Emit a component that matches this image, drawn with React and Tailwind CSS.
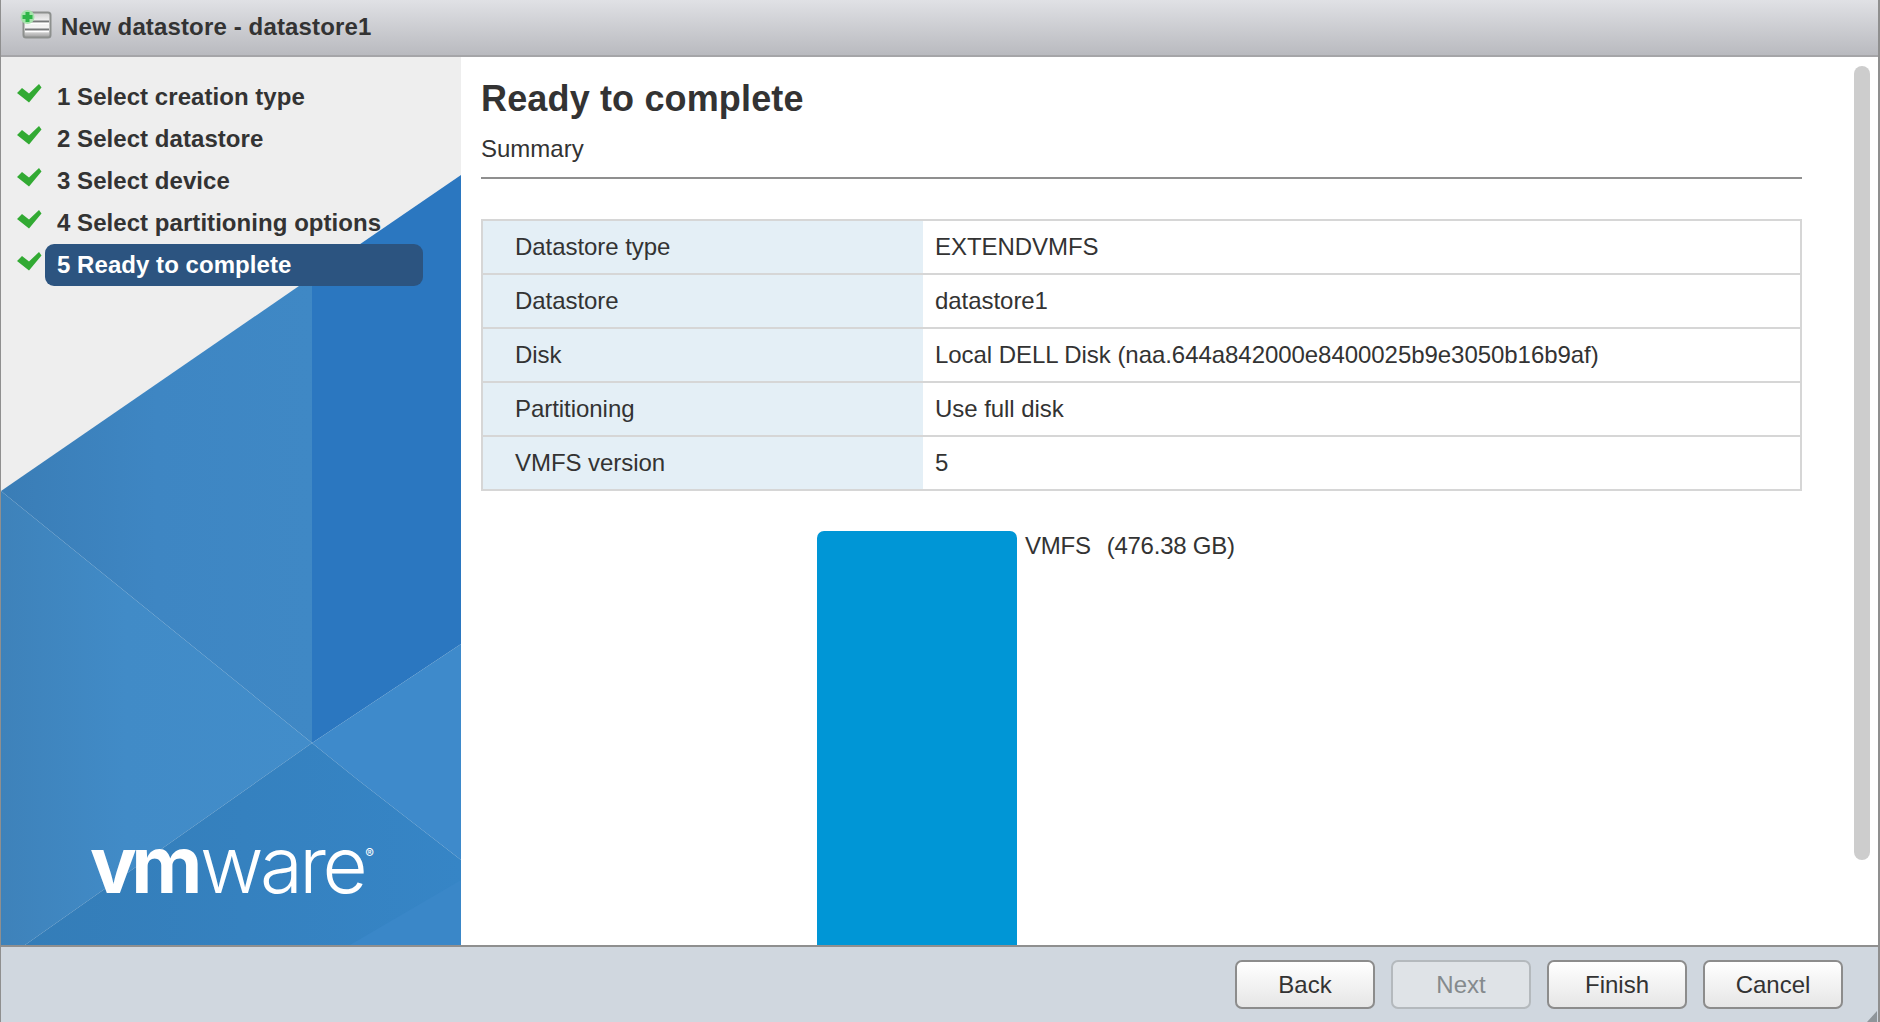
import React from 'react';

const font = { fontFamily: '"Liberation Sans", Arial, sans-serif' };

const steps = [
  '1 Select creation type',
  '2 Select datastore',
  '3 Select device',
  '4 Select partitioning options',
  '5 Ready to complete'
];

const rows = [
  ['Datastore type', 'EXTENDVMFS'],
  ['Datastore', 'datastore1'],
  ['Disk', 'Local DELL Disk (naa.644a842000e8400025b9e3050b16b9af)'],
  ['Partitioning', 'Use full disk'],
  ['VMFS version', '5']
];

function DatastoreIcon() {
  return (
    <svg width="32" height="30" viewBox="0 0 32 30" className="shrink-0 -mt-[8px]">
      <defs>
        <linearGradient id="disk" x1="0" y1="0" x2="0" y2="1">
          <stop offset="0" stopColor="#cfcfcf" />
          <stop offset="0.3" stopColor="#eeeeee" />
          <stop offset="0.65" stopColor="#f5f5f5" />
          <stop offset="1" stopColor="#9c9c9c" />
        </linearGradient>
      </defs>
      <rect x="3.500" y="3.500" width="27" height="25" rx="2.500" fill="url(#disk)" stroke="#8d908e" strokeWidth="2" />
      <path d="M5 12.500h24M5 20.500h24" stroke="#77797a" strokeWidth="2" />
      <path d="M5 14.500h24M5 22.500h24" stroke="#ffffff" strokeWidth="1.500" />
      <circle cx="7.500" cy="8" r="7" fill="#a8e2ad" />
      <path d="M7.500 3v10M2.500 8h10" stroke="#2fb548" strokeWidth="4" />
    </svg>
  );
}

function Check() {
  return (
    <svg width="25" height="19" viewBox="0 0 25 19" className="shrink-0">
      <path d="M0 9 L5 4 L12 9.500 L22 0 L24.500 3.500 L12 18.500 Z" fill="#32aa33" />
    </svg>
  );
}

function SidebarArt() {
  return (
    <svg className="absolute inset-0" width="460" height="888" viewBox="0 0 460 888" preserveAspectRatio="none">
      <defs>
        <linearGradient id="facet" x1="0" y1="0" x2="1" y2="0">
          <stop offset="0" stopColor="#3a7db6" />
          <stop offset="0.5" stopColor="#3e86c3" />
          <stop offset="1" stopColor="#3f88c5" />
        </linearGradient>
        <linearGradient id="lower" x1="0" y1="0" x2="1" y2="0">
          <stop offset="0" stopColor="#3e82ba" />
          <stop offset="0.4" stopColor="#418bc7" />
          <stop offset="1" stopColor="#428dca" />
        </linearGradient>
        <linearGradient id="floor" x1="0" y1="0" x2="1" y2="0">
          <stop offset="0" stopColor="#347db8" />
          <stop offset="1" stopColor="#3685c6" />
        </linearGradient>
      </defs>
      <rect width="460" height="888" fill="#eeeeee" />
      <polygon points="0,434 311,220 311,686" fill="url(#facet)" />
      <polygon points="311,220 460,118 460,587 311,686" fill="#2b77c0" />
      <polygon points="0,434 311,686 24,888 0,888" fill="url(#lower)" />
      <polygon points="311,686 460,587 460,803 357,723" fill="#3e8acb" />
      <polygon points="311,686 357,723 460,803 460,888 24,888" fill="url(#floor)" />
      <polygon points="460,823 460,888 349,888" fill="#3a87c8" />
    </svg>
  );
}

function Logo() {
  return (
    <div
      className="absolute left-[89px] top-[769px] flex items-start text-white leading-none"
      style={{ fontFamily: 'Inter, "Liberation Sans", sans-serif' }}
    >
      <span className="text-[78px] font-bold tracking-[-5.500px]">vm</span>
      <span className="text-[78px] font-light tracking-[-3.500px] ml-[3px]">ware</span>
      <span className="text-[13px] mt-[21px] ml-[1px]">®</span>
    </div>
  );
}

function WizardButton({ label, disabled }) {
  return (
    <button
      className={`w-[140px] h-[49px] rounded-[7px] border-2 text-[24px] ${
        disabled
          ? 'border-[#b4b9bd] bg-[#dfe3e7] text-[#858a8d]'
          : 'border-[#8c8c8c] bg-gradient-to-b from-white to-[#e6e6e6] text-[#333333]'
      }`}
    >
      {label}
    </button>
  );
}

export default function App() {
  return (
    <div className="w-[1880px] h-[1022px] flex flex-col overflow-hidden bg-white text-[#333333] border-l border-r-2 border-[#8f8f8f]" style={font}>
      <header className="h-[57px] shrink-0 flex items-center pl-[19px] gap-[9px] border-b-2 border-[#a5a5a8] bg-gradient-to-b from-[#e0e1e5] to-[#b9babf]">
        <DatastoreIcon />
        <span className="text-[24px] font-bold tracking-[0.14px] -mt-[2px]">New datastore - datastore1</span>
      </header>

      <div className="flex-1 min-h-0 flex relative">
        <aside className="w-[460px] shrink-0 relative pt-[19px] pl-[16px] overflow-hidden">
          <SidebarArt />
          <ul className="relative flex flex-col">
            {steps.map((step, i) => (
              <li key={step} className="h-[42px] flex items-center">
                <span className="w-[28px] -mt-[7px]"><Check /></span>
                <span
                  className={`w-[378px] h-[42px] pl-[12px] flex items-center rounded-[9px] text-[24px] font-bold tracking-[0.05px] ${
                    i === 4 ? 'bg-[#2c5480] text-white' : ''
                  }`}
                >
                  {step}
                </span>
              </li>
            ))}
          </ul>
          <Logo />
        </aside>

        <main className="flex-1 min-w-0 pl-[20px] pt-[20px] overflow-hidden">
          <div className="w-[1321px]">
            <h1 className="text-[36px] leading-[44px] font-bold tracking-[0.15px]">Ready to complete</h1>
            <p className="text-[24px] leading-[28px] mt-[14px]">Summary</p>
            <div className="h-[2px] bg-[#8f8f8f] mt-[14px]" />

            <div className="mt-[40px] border-2 border-b-0 border-[#d6d6d6] text-[24px] tracking-[-0.05px]">
              {rows.map(([label, value]) => (
                <div key={label} className="h-[54px] flex border-b-2 border-[#d6d6d6]">
                  <div className="w-[440px] shrink-0 bg-[#e4eff6] pl-[32px] flex items-center">{label}</div>
                  <div className="pl-[12px] flex items-center">{value}</div>
                </div>
              ))}
            </div>

            <div className="mt-[40px] ml-[336px] flex items-start">
              <div className="w-[200px] h-[420px] bg-[#0096d6] rounded-t-[7px]" />
              <div className="ml-[8px] -mt-[1px] text-[24px] leading-[32px] tracking-[-0.25px] flex gap-[16px]">
                <span>VMFS</span>
                <span>(476.38 GB)</span>
              </div>
            </div>
          </div>
        </main>

        <div className="absolute right-[8px] top-[9px] w-[16px] h-[794px] rounded-full bg-[#cdcdcd]" />
      </div>

      <footer className="h-[77px] shrink-0 relative flex items-start justify-end gap-[16px] pt-[13px] pr-[35px] border-t-2 border-[#8f8f8f] bg-[#d0d7df]">
        <WizardButton label="Back" />
        <WizardButton label="Next" disabled />
        <WizardButton label="Finish" />
        <WizardButton label="Cancel" />
        <svg className="absolute right-0 bottom-0" width="12" height="11" viewBox="0 0 12 11">
          <polygon points="11,0 11,11 1,11" fill="#8f959a" />
        </svg>
      </footer>
    </div>
  );
}
